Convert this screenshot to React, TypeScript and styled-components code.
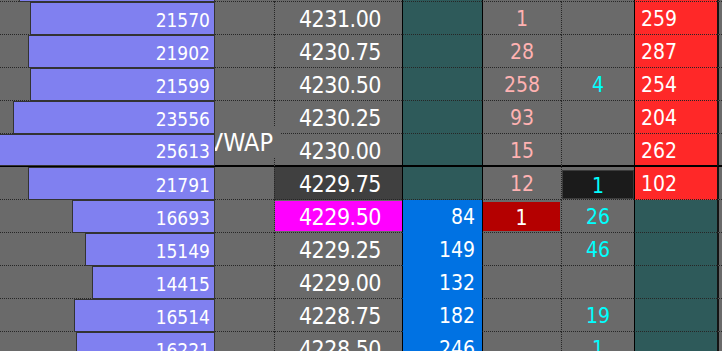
import React from "react";
import styled, { createGlobalStyle, css } from "styled-components";

const GlobalStyle = createGlobalStyle`
  html, body {
    margin: 0;
    padding: 0;
    background: #6a6a6a;
    overflow: hidden;
  }
  * {
    box-sizing: border-box;
  }
`;

const FONT = `"DejaVu Sans Condensed", "DejaVu Sans", sans-serif`;
const DOT = "1px dotted #262626";
const SCALE = 0.00856;

type Level = {
  volume: number;
  price: string;
  bid?: number;
  sold?: number;
  bought?: number;
  ask?: number;
  priceTone?: "plain" | "last" | "inside";
  soldHit?: boolean;
  boughtLast?: boolean;
  thick?: boolean;
  hidden?: boolean; // row scrolled mostly out of view, only its edge shows
};

const LEVELS: Level[] = [
  { volume: 22900, price: "4231.25", ask: 271, hidden: true },
  { volume: 21570, price: "4231.00", sold: 1, ask: 259 },
  { volume: 21902, price: "4230.75", sold: 28, ask: 287 },
  { volume: 21599, price: "4230.50", sold: 258, bought: 4, ask: 254 },
  { volume: 23556, price: "4230.25", sold: 93, ask: 204 },
  { volume: 25613, price: "4230.00", sold: 15, ask: 262, thick: true },
  { volume: 21791, price: "4229.75", sold: 12, bought: 1, ask: 102, priceTone: "last", boughtLast: true },
  { volume: 16693, price: "4229.50", bid: 84, sold: 1, bought: 26, priceTone: "inside", soldHit: true },
  { volume: 15149, price: "4229.25", bid: 149, bought: 46 },
  { volume: 14415, price: "4229.00", bid: 132 },
  { volume: 16514, price: "4228.75", bid: 182, bought: 19 },
  { volume: 16221, price: "4228.50", bid: 246, bought: 1 },
];

const Frame = styled.div`
  position: relative;
  width: 722px;
  height: 351px;
  overflow: hidden;
  background: #6a6a6a;
  font-family: ${FONT};
  color: #ffffff;
`;

const Ladder = styled.div`
  margin-top: -31px;
`;

const Row = styled.div<{ $thick?: boolean }>`
  display: grid;
  grid-template-columns: 215px 59px 128px 80px 79px 73px 83px 1fr;
  height: 33px;
  ${(p) =>
    p.$thick &&
    css`
      & > div {
        border-bottom: 2px solid #000;
      }
    `}
`;

const VolumeCell = styled.div`
  display: flex;
  justify-content: flex-end;
  align-items: flex-start;
  border-bottom: ${DOT};
`;

const Bar = styled.div`
  flex-shrink: 0;
  height: calc(100% + 1px);
  display: flex;
  align-items: center;
  justify-content: flex-end;
  padding: 2px 4px 0 0;
  background: #8080f0;
  border: 1px solid #333333;
  font-size: 19px;
`;

const GapCell = styled.div`
  border-bottom: ${DOT};
`;

const PriceCell = styled.div<{ $tone: "plain" | "last" | "inside" }>`
  display: flex;
  border-left: ${DOT};
  border-bottom: ${DOT};
  background: ${(p) => (p.$tone === "last" ? "#404040" : "transparent")};
  padding: ${(p) => (p.$tone === "inside" ? "1px 0 1px 0" : "0")};
`;

const PriceText = styled.div<{ $tone: "plain" | "last" | "inside" }>`
  flex: 1;
  display: flex;
  align-items: center;
  justify-content: flex-end;
  padding: 2px 21px 0 0;
  font-size: 23px;
  letter-spacing: -0.5px;
  background: ${(p) => (p.$tone === "inside" ? "#ff00ff" : "transparent")};
`;

const BidCell = styled.div<{ $filled: boolean }>`
  display: flex;
  align-items: center;
  justify-content: flex-end;
  padding: 2px 7px 0 0;
  font-size: 21px;
  border-left: 1px solid #000;
  border-bottom: ${(p) => (p.$filled ? "1px solid transparent" : DOT)};
  background: ${(p) => (p.$filled ? "#0072e3" : "#2e5a5a")};
`;

const SoldCell = styled.div`
  display: flex;
  border-left: 1px solid #000;
  border-bottom: ${DOT};
`;

const SoldText = styled.div<{ $hit?: boolean }>`
  flex: 1;
  display: flex;
  align-items: center;
  justify-content: center;
  padding-top: 2px;
  font-size: 21px;
  color: ${(p) => (p.$hit ? "#ffffff" : "#ffb2b2")};
  background: ${(p) => (p.$hit ? "#b40000" : "transparent")};
  margin: ${(p) => (p.$hit ? "2px 1px 1px 0" : "0")};
`;

const BoughtCell = styled.div`
  display: flex;
  border-left: ${DOT};
  border-bottom: ${DOT};
`;

const BoughtText = styled.div<{ $last?: boolean }>`
  flex: 1;
  display: flex;
  align-items: center;
  justify-content: center;
  padding-top: 2px;
  font-size: 21px;
  color: #00ffff;
  background: ${(p) => (p.$last ? "#1b1b1b" : "transparent")};
  border: ${(p) => (p.$last ? "1px solid #3c3c3c" : "none")};
  margin: ${(p) => (p.$last ? "3px 0 0 0" : "0")};
`;

const AskCell = styled.div<{ $filled: boolean }>`
  display: flex;
  align-items: center;
  padding: 2px 0 0 6px;
  font-size: 21px;
  border-left: 1px solid #000;
  border-bottom: ${DOT};
  background: ${(p) => (p.$filled ? "#ff2828" : "#2e5a5a")};
`;

const EdgeCell = styled.div`
  border-left: 2px solid #141414;
  border-bottom: ${DOT};
`;

const VwapTag = styled.div`
  position: absolute;
  left: 215px;
  top: 126px;
  width: 66px;
  height: 31px;
  overflow: hidden;
  display: flex;
  align-items: center;
  justify-content: flex-end;
  padding: 2px 8px 0 0;
  background: #6a6a6a;
  font-size: 25px;
  white-space: nowrap;
`;

const LadderRow = ({ level }: { level: Level }) => {
  const tone = level.priceTone ?? "plain";
  const show = !level.hidden;
  return (
    <Row $thick={level.thick}>
      <VolumeCell>
        <Bar style={{ width: Math.round(level.volume * SCALE) }}>{show && level.volume}</Bar>
      </VolumeCell>
      <GapCell />
      <PriceCell $tone={tone}>
        <PriceText $tone={tone}>{show && level.price}</PriceText>
      </PriceCell>
      <BidCell $filled={level.bid !== undefined}>{level.bid}</BidCell>
      <SoldCell>
        <SoldText $hit={level.soldHit}>{level.sold}</SoldText>
      </SoldCell>
      <BoughtCell>
        <BoughtText $last={level.boughtLast}>{level.bought}</BoughtText>
      </BoughtCell>
      <AskCell $filled={level.ask !== undefined}>{show && level.ask}</AskCell>
      <EdgeCell />
    </Row>
  );
};

export default function App() {
  return (
    <>
      <GlobalStyle />
      <Frame>
        <Ladder>
          {LEVELS.map((level) => (
            <LadderRow key={level.price} level={level} />
          ))}
        </Ladder>
        <VwapTag>VWAP</VwapTag>
      </Frame>
    </>
  );
}
